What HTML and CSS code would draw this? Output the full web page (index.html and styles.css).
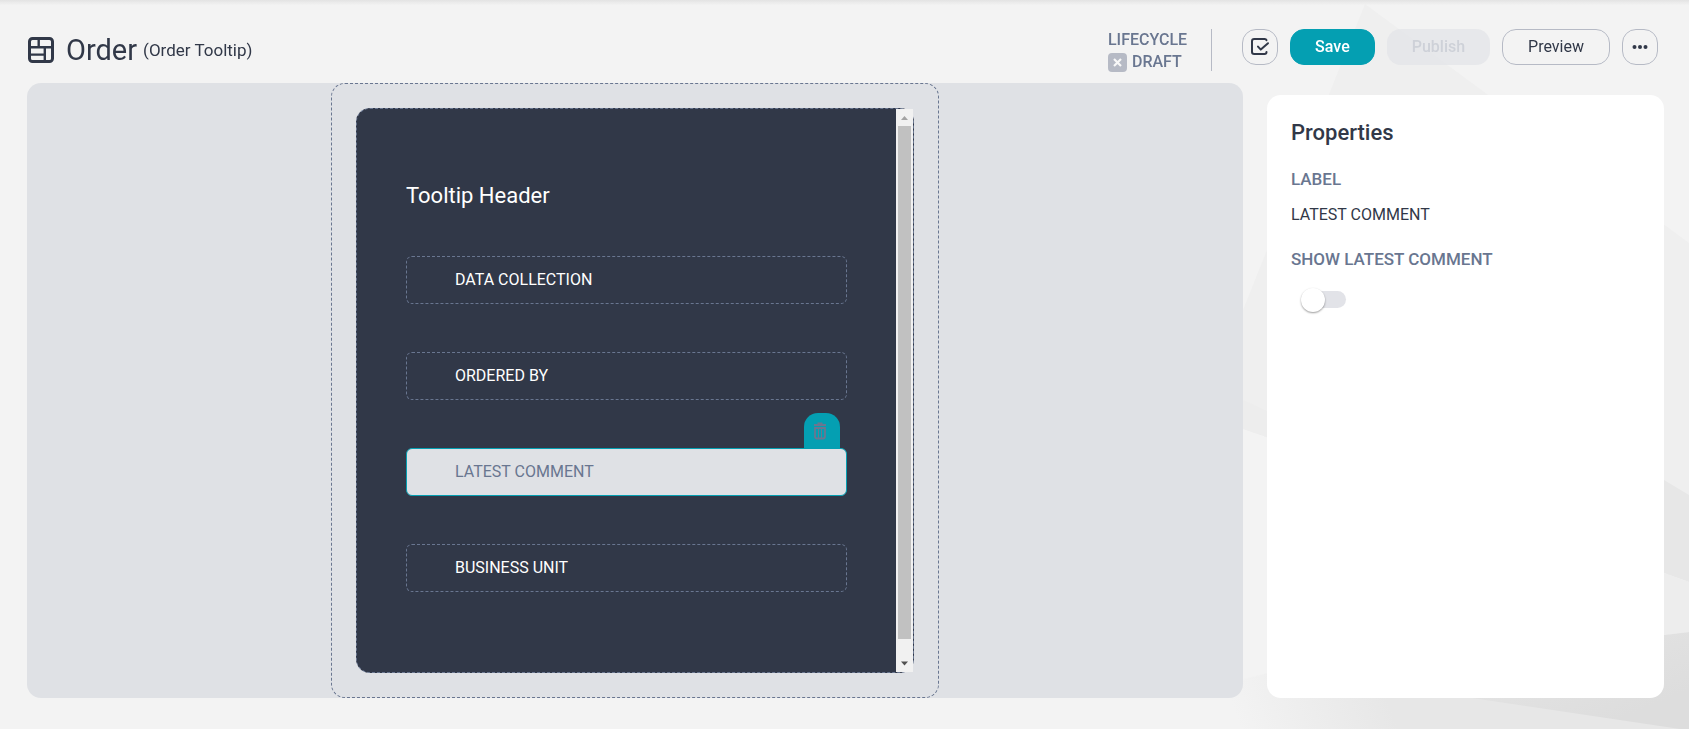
FILE: index.html
```html
<!DOCTYPE html>
<html lang="en">
<head>
<meta charset="utf-8">
<title>Order (Order Tooltip)</title>
<link rel="stylesheet" href="styles.css">
</head>
<body>
<svg class="backdrop" width="489" height="729" viewBox="1200 0 489 729" aria-hidden="true">
  <defs>
    <linearGradient id="fade" gradientUnits="userSpaceOnUse" x1="1230" y1="700" x2="1370" y2="650">
      <stop offset="0" stop-color="#f3f3f3"/><stop offset="1" stop-color="#e7e7e7"/>
    </linearGradient>
    <linearGradient id="facet" gradientUnits="userSpaceOnUse" x1="1660" y1="620" x2="1689" y2="690">
      <stop offset="0" stop-color="#e2e2e2"/><stop offset="1" stop-color="#dddddd"/>
    </linearGradient>
  </defs>
  <path fill="#efefef" d="M1365 4 1689 243V582L1243 429 1200 415V418Z"/>
  <path fill="#ededed" d="M1200 382 1243 400 1267 411 1500 517 1243 429 1200 415Z"/>
  <path fill="#e7e7e7" d="M1400 330 1664 480 1689 495V582L1664 573Z"/>
  <path fill="#ededed" d="M1400 483 1664 573 1689 582V632L1664 635 1400 665Z"/>
  <path fill="url(#fade)" d="M1200 729V690L1400 640 1689 680V729Z"/>
  <path fill="url(#facet)" d="M1400 687V665L1664 635 1689 632V729H1680L1472 698Z"/>
</svg>
<div class="page">
  <header class="header">
    <svg class="logo" width="28" height="28" viewBox="0 0 28 28" fill="none" stroke="#313848" aria-hidden="true">
      <rect x="2.5" y="2.5" width="23" height="23" rx="3" stroke-width="3"/>
      <path stroke-width="2.4" d="M2 11.2H26M11.700 2V11M17.800 11V25M2 18.600H17.800"/>
    </svg>
    <h1 class="title">Order</h1>
    <span class="subtitle">(Order Tooltip)</span>
    <div class="lifecycle">
      <span>LIFECYCLE</span>
      <span class="status">
        <svg class="status-icon" width="19" height="19" viewBox="0 0 19 19" aria-hidden="true">
          <rect width="19" height="19" rx="4" fill="#b6bac5"/>
          <path d="M6 6 13 13M13 6 6 13" stroke="#f8f8f8" stroke-width="2.2"/>
        </svg>
        DRAFT
      </span>
    </div>
    <div class="actions">
      <button class="btn icon-btn" aria-label="Validate">
        <svg width="20" height="20" viewBox="0 0 20 20" fill="none" stroke="#313848" stroke-width="2" stroke-linecap="round" stroke-linejoin="round" aria-hidden="true">
          <path d="M16.500 3.200C16.200 2.400 15.600 2 14.800 2H4.200C2.900 2 2 2.900 2 4.200V15C2 16.300 2.900 17 4.200 17H14.500C15.600 17 16.500 16.300 16.500 15"/>
          <path d="M8 9.600 10.800 12.600 18 6.200"/>
        </svg>
      </button>
      <button class="btn save">Save</button>
      <button class="btn publish" disabled>Publish</button>
      <button class="btn">Preview</button>
      <button class="btn icon-btn" aria-label="More actions">
        <svg width="16" height="6" viewBox="0 0 16 6" fill="#313848" aria-hidden="true"><circle cx="2.500" cy="3" r="2"/><circle cx="8" cy="3" r="2"/><circle cx="13.500" cy="3" r="2"/></svg>
      </button>
    </div>
  </header>
  <main class="workspace">
    <section class="canvas">
      <div class="frame">
        <div class="tooltip">
          <div class="tooltip-body">
            <h2 class="tooltip-title">Tooltip Header</h2>
            <div class="field">DATA COLLECTION</div>
            <div class="field">ORDERED BY</div>
            <div class="field selected">LATEST COMMENT
              <button class="delete" aria-label="Delete field">
                <svg width="14" height="18" viewBox="0 0 14 18" fill="none" stroke="#6b7690" aria-hidden="true">
                  <path stroke-width="2" d="M1 3H13"/><path stroke-width="2" d="M4.500 1.500H9.500"/>
                  <path stroke-width="1.800" d="M2 6H12V14.500Q12 16.500 10 16.500H4Q2 16.500 2 14.500Z"/>
                  <path stroke-width="1" d="M5.500 6.500V16M8.500 6.500V16"/>
                </svg>
              </button>
            </div>
            <div class="field">BUSINESS UNIT</div>
          </div>
          <div class="scrollbar" aria-hidden="true">
            <svg width="17" height="17" viewBox="0 0 17 17"><path fill="#a3a3a3" d="M8.500 7 12 11H5Z"/></svg>
            <div class="track"><div class="thumb"></div></div>
            <svg width="17" height="17" viewBox="0 0 17 17"><path fill="#505050" d="M8.500 10.500 12 6.500H5Z"/></svg>
          </div>
        </div>
      </div>
    </section>
    <aside class="properties">
      <h2 class="properties-title">Properties</h2>
      <h3 class="label">LABEL</h3>
      <p class="value">LATEST COMMENT</p>
      <label class="label" for="show-comment">SHOW LATEST COMMENT</label>
      <input class="switch" type="checkbox" role="switch" id="show-comment">
    </aside>
  </main>
</div>
</body>
</html>
```
FILE: styles.css
```css
* { box-sizing: border-box; }
body {
  margin: 0;
  background: #f3f3f3;
  color: #313848;
  font: 16px/20px Roboto, "Liberation Sans", sans-serif;
}
h1, h2, h3, p { margin: 0; }
.backdrop { position: fixed; top: 0; right: 0; z-index: -1; }
.page {
  display: flex;
  flex-direction: column;
  min-height: 100vh;
  padding: 0 25px 31px 27px;
  background: linear-gradient(#e3e3e3, #e9e9e9 2px, #f3f3f300 5px);
}
.header {
  display: flex;
  align-items: flex-start;
  height: 83px;
  padding: 29px 6px 0 0;
}
.logo { margin-top: 7px; }
.title { margin: 5px 0 0 11px; font-size: 29px; line-height: 32px; font-weight: 400; }
.subtitle { margin: 11px auto 0 6px; font-size: 17px; }
.lifecycle {
  display: flex;
  flex-direction: column;
  height: 42px;
  padding-right: 24px;
  margin-right: 30px;
  border-right: 1px solid #b6bac5;
  color: #697690;
  line-height: 22px;
  font-weight: 500;
}
.status { display: flex; align-items: center; gap: 5px; }
.actions { display: flex; gap: 12px; }
.btn {
  display: flex;
  align-items: center;
  justify-content: center;
  height: 36px;
  padding: 0 25px;
  border: 1px solid #b6bac5;
  border-radius: 14px;
  background: transparent;
  color: #313848;
  font: inherit;
}
.icon-btn { width: 36px; padding: 0; }
.save { padding: 0 24px; border-color: #049fb2; background: #049fb2; color: #fff; font-weight: 500; }
.publish { padding: 0 24px; border-color: transparent; background: #dfe1e699; color: #ced1d8; font-weight: 500; }
.workspace {
  display: grid;
  flex: 1;
  grid-template-columns: 1216fr 397fr;
  gap: 24px;
}
.canvas {
  display: flex;
  justify-content: center;
  border-radius: 14px;
  background: #dfe1e5;
}
.frame {
  display: flex;
  width: 50%;
  padding: 24px;
  border: 1px dashed #697690;
  border-radius: 14px;
}
.tooltip {
  display: flex;
  flex: 1;
  border: 1px dashed #697690;
  border-radius: 14px;
  background: #313848;
}
.tooltip-body {
  display: flex;
  flex: 1;
  flex-direction: column;
  gap: 48px;
  padding: 75px 49px 48px;
  color: #fff;
}
.tooltip-title { font-size: 22px; line-height: 24px; font-weight: 400; }
.field {
  position: relative;
  height: 48px;
  padding: 13px 48px;
  border: 1px dashed #697690;
  border-radius: 6px;
}
.selected { border: 1px solid #049fb2; background: #dfe1e5; color: #697690; }
.delete {
  position: absolute;
  right: 6px;
  bottom: 100%;
  display: flex;
  justify-content: center;
  width: 36px;
  height: 36px;
  padding: 9px 4px 0 0;
  border: 0;
  border-radius: 14px 14px 0 0;
  background: #049fb2;
}
.scrollbar { display: flex; flex-direction: column; width: 17px; background: #f1f1f1; }
.track { flex: 1; padding: 0 2px; }
.thumb { height: 97%; background: #c1c1c1; }
.properties {
  display: flex;
  flex-direction: column;
  align-items: flex-start;
  margin-top: 12px;
  padding: 24px;
  border-radius: 14px;
  background: #fff;
}
.properties-title { margin-bottom: 22px; font-size: 22px; line-height: 28px; font-weight: 500; }
.label { color: #697690; font-size: 17px; line-height: 20px; font-weight: 500; }
.value { margin: 16px 0 24px; }
.switch {
  appearance: none;
  display: flex;
  align-items: center;
  width: 42px;
  height: 17px;
  margin: 22px 0 0 13px;
  border-radius: 9px;
  background: #e2e3e8;
}
.switch::before {
  content: "";
  width: 24px;
  height: 24px;
  margin-left: -3px;
  border-radius: 50%;
  background: #fff;
  box-shadow: 0 1px 2px #00000066;
}
.switch:checked { justify-content: flex-end; background: #049fb2; }
```
